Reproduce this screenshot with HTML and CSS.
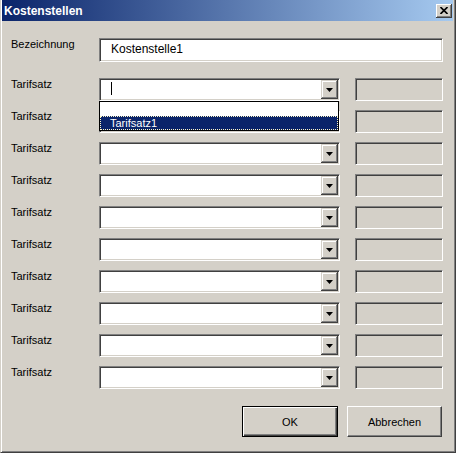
FILE: index.html
```html
<!DOCTYPE html>
<html lang="de">
<head>
    <meta charset="UTF-8">
    <title>Kostenstellen</title>
    <link rel="stylesheet" href="styles.css">
</head>
<body>
    <div class="dialog">
        <div class="titlebar">
            <span class="title">Kostenstellen</span>
            <span class="close">
                <svg width="8" height="7" viewBox="0 0 8 7"><path d="M0.5 0 L7.5 7 M7.5 0 L0.5 7" stroke="#000" stroke-width="1.6"/></svg>
            </span>
        </div>

        <div class="content">
            <div class="row">
                <label class="label">Bezeichnung</label>
                <div class="field">Kostenstelle1</div>
            </div>

            <div class="rates">
                <div class="row">
                    <label class="label">Tarifsatz</label>
                    <div class="combo">
                        <span class="caret"></span>
                        <span class="drop-btn"><svg width="7" height="4" viewBox="0 0 7 4"><path d="M0 0 H7 L3.5 4 Z" fill="#000"/></svg></span>
                        <div class="list">
                            <div class="item"></div>
                            <div class="item selected">Tarifsatz1</div>
                        </div>
                    </div>
                    <div class="readonly"></div>
                </div>
                <div class="row">
                    <label class="label">Tarifsatz</label>
                    <div class="combo"><span class="drop-btn"><svg width="7" height="4" viewBox="0 0 7 4"><path d="M0 0 H7 L3.5 4 Z" fill="#000"/></svg></span></div>
                    <div class="readonly"></div>
                </div>
                <div class="row">
                    <label class="label">Tarifsatz</label>
                    <div class="combo"><span class="drop-btn"><svg width="7" height="4" viewBox="0 0 7 4"><path d="M0 0 H7 L3.5 4 Z" fill="#000"/></svg></span></div>
                    <div class="readonly"></div>
                </div>
                <div class="row">
                    <label class="label">Tarifsatz</label>
                    <div class="combo"><span class="drop-btn"><svg width="7" height="4" viewBox="0 0 7 4"><path d="M0 0 H7 L3.5 4 Z" fill="#000"/></svg></span></div>
                    <div class="readonly"></div>
                </div>
                <div class="row">
                    <label class="label">Tarifsatz</label>
                    <div class="combo"><span class="drop-btn"><svg width="7" height="4" viewBox="0 0 7 4"><path d="M0 0 H7 L3.5 4 Z" fill="#000"/></svg></span></div>
                    <div class="readonly"></div>
                </div>
                <div class="row">
                    <label class="label">Tarifsatz</label>
                    <div class="combo"><span class="drop-btn"><svg width="7" height="4" viewBox="0 0 7 4"><path d="M0 0 H7 L3.5 4 Z" fill="#000"/></svg></span></div>
                    <div class="readonly"></div>
                </div>
                <div class="row">
                    <label class="label">Tarifsatz</label>
                    <div class="combo"><span class="drop-btn"><svg width="7" height="4" viewBox="0 0 7 4"><path d="M0 0 H7 L3.5 4 Z" fill="#000"/></svg></span></div>
                    <div class="readonly"></div>
                </div>
                <div class="row">
                    <label class="label">Tarifsatz</label>
                    <div class="combo"><span class="drop-btn"><svg width="7" height="4" viewBox="0 0 7 4"><path d="M0 0 H7 L3.5 4 Z" fill="#000"/></svg></span></div>
                    <div class="readonly"></div>
                </div>
                <div class="row">
                    <label class="label">Tarifsatz</label>
                    <div class="combo"><span class="drop-btn"><svg width="7" height="4" viewBox="0 0 7 4"><path d="M0 0 H7 L3.5 4 Z" fill="#000"/></svg></span></div>
                    <div class="readonly"></div>
                </div>
                <div class="row">
                    <label class="label">Tarifsatz</label>
                    <div class="combo"><span class="drop-btn"><svg width="7" height="4" viewBox="0 0 7 4"><path d="M0 0 H7 L3.5 4 Z" fill="#000"/></svg></span></div>
                    <div class="readonly"></div>
                </div>
            </div>

            <div class="buttons">
                <span class="btn default">OK</span>
                <span class="btn">Abbrechen</span>
            </div>
        </div>
    </div>
</body>
</html>
```

FILE: styles.css
```css
/* Win2000 style dialog */
body {
    margin: 0;
    padding: 0;
    background-color: #d4d0c8;
    font-family: "Liberation Sans", Arial, sans-serif;
    font-size: 11px;
    color: #000;
}
.dialog {
    width: 456px;
    height: 453px;
    box-sizing: border-box;
    background-color: #d4d0c8;
    border-left: 1px solid #d4d0c8;
    border-right: 1px solid #404040;
    border-bottom: 1px solid #404040;
    box-shadow: inset 1px 0 #fff, inset -1px -1px #808080;
}
.titlebar {
    height: 21px;
    margin: 0 2px 0 1px;
    padding: 0 1px 0 2px;
    display: flex;
    align-items: center;
    justify-content: space-between;
    background: linear-gradient(to right, #0a246a, #a6caf0);
}
.title {
    color: #fff;
    font-weight: bold;
    font-size: 12px;
    padding-top: 1px;
}
.close {
    width: 16px;
    height: 14px;
    box-sizing: border-box;
    display: flex;
    align-items: center;
    justify-content: center;
    background-color: #d4d0c8;
    box-shadow: inset -1px -1px #404040, inset 1px 1px #fff, inset -2px -2px #808080;
}
.content {
    padding: 17px 12px 0 10px;
}
.row {
    display: flex;
    align-items: flex-start;
}
.label {
    width: 88px;
    flex-shrink: 0;
    line-height: 13px;
}
.field {
    flex: 1;
    height: 24px;
    box-sizing: border-box;
    padding-left: 11px;
    font-size: 12px;
    line-height: 20px;
    background-color: #fff;
    border-top: 1px solid #808080;
    border-left: 1px solid #808080;
    border-right: 1px solid #fff;
    border-bottom: 1px solid #fff;
    box-shadow: inset 1px 1px #404040, inset -1px -1px #d4d0c8;
}
.rates {
    margin-top: 16px;
    display: flex;
    flex-direction: column;
    gap: 9px;
}
.combo {
    position: relative;
    width: 241px;
    height: 23px;
    box-sizing: border-box;
    display: flex;
    justify-content: flex-end;
    padding: 1px;
    background-color: #fff;
    border-top: 1px solid #808080;
    border-left: 1px solid #808080;
    border-right: 1px solid #fff;
    border-bottom: 1px solid #fff;
    box-shadow: inset 1px 1px #404040, inset -1px -1px #d4d0c8;
}
.drop-btn {
    width: 17px;
    height: 19px;
    display: flex;
    align-items: center;
    justify-content: center;
    background-color: #d4d0c8;
    box-shadow: inset -1px -1px #404040, inset 1px 1px #d4d0c8, inset -2px -2px #808080, inset 2px 2px #fff;
}
.caret {
    position: absolute;
    left: 11px;
    top: 3px;
    width: 1px;
    height: 13px;
    background-color: #000;
}
.list {
    position: absolute;
    left: -1px;
    top: 22px;
    width: 240px;
    box-sizing: border-box;
    border: 1px solid #000;
    background-color: #fff;
    z-index: 2;
}
.item {
    height: 14px;
    box-sizing: border-box;
    line-height: 12px;
    padding-left: 9px;
}
.item.selected {
    background-color: #0a246a;
    color: #fff;
    border: 1px dotted #fff8c8;
}
.readonly {
    width: 88px;
    height: 23px;
    margin-left: 15px;
    box-sizing: border-box;
    border-top: 1px solid #808080;
    border-left: 1px solid #808080;
    border-right: 1px solid #fff;
    border-bottom: 1px solid #fff;
    box-shadow: inset 1px 1px #404040, inset -1px -1px #d4d0c8;
}
.buttons {
    margin-top: 17px;
    margin-right: 1px;
    display: flex;
    justify-content: flex-end;
    gap: 9px;
}
.btn {
    width: 95px;
    height: 31px;
    box-sizing: border-box;
    display: flex;
    align-items: center;
    justify-content: center;
    background-color: #d4d0c8;
    border-top: 1px solid #fff;
    border-left: 1px solid #fff;
    border-right: 1px solid #404040;
    border-bottom: 1px solid #404040;
    box-shadow: inset -1px -1px #808080;
}
.btn.default {
    width: 96px;
    border: 1px solid #000;
    box-shadow: inset 1px 1px #fff, inset -1px -1px #404040, inset -2px -2px #808080;
}
```
